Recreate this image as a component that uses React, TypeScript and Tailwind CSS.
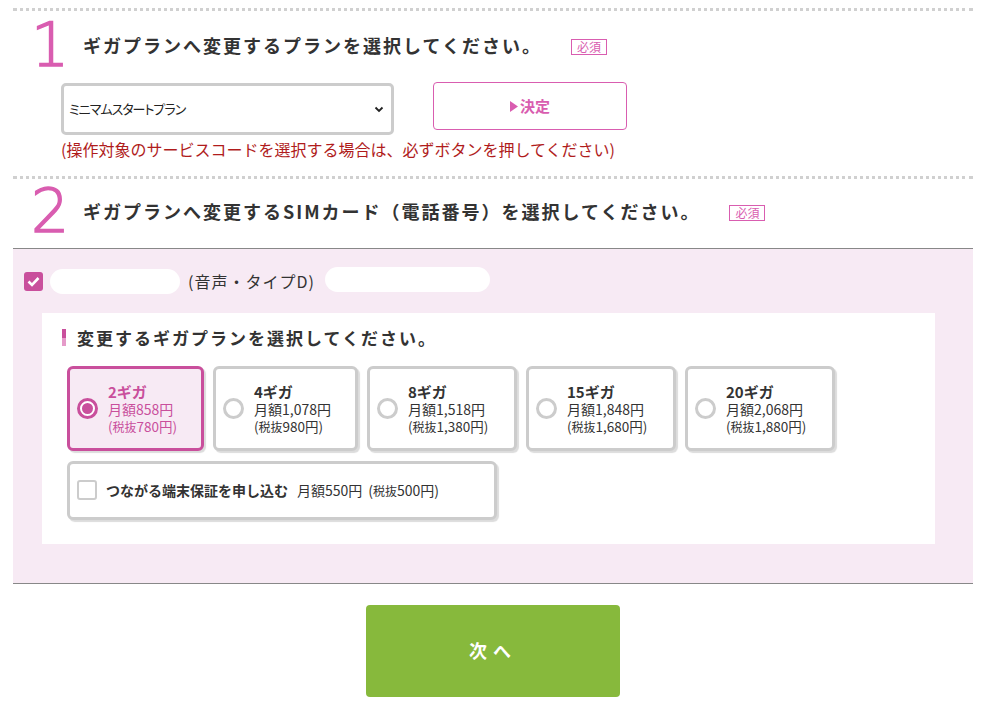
const plans = [
  { name: '2ギガ', monthly: '858', net: '780', width: 'w-[137px]' },
  { name: '4ギガ', monthly: '1,078', net: '980', width: 'w-[145px]' },
  { name: '8ギガ', monthly: '1,518', net: '1,380', width: 'w-[150px]' },
  { name: '15ギガ', monthly: '1,848', net: '1,680', width: 'w-[150px]' },
  { name: '20ギガ', monthly: '2,068', net: '1,880', width: 'w-[150px]' },
];

const Badge = () => (
  <span className="inline-block border border-[#d95db0] px-[5px] text-[12px] leading-[14px] text-[#d95db0]">
    必須
  </span>
);

const StepHeader = ({ num, title }: { num: string; title: string }) => (
  <div className="flex h-[60px] items-center">
    <div className="w-[70px] pl-[18px] font-['DejaVu_Sans',sans-serif] text-[60px] font-extralight leading-none text-[#d95db0] [-webkit-text-stroke:1.5px_#d95db0]">
      {num}
    </div>
    <h2 className="text-[18px] font-bold tracking-[2px] text-[#333]">{title}</h2>
    <div className="ml-[29px]">
      <Badge />
    </div>
  </div>
);

export default function App() {
  return (
    <div className="min-h-[707px] w-[990px] bg-white font-['Noto_Sans_CJK_JP',sans-serif] text-[#333]">
      <div className="ml-[13px] w-[960px] pt-[8px]">
        {/* Step 1 */}
        <div className="border-t-[3px] border-dotted border-[#d0d0d0]" />
        <div className="mt-[4px]">
          <StepHeader num="1" title="ギガプランへ変更するプランを選択してください。" />
        </div>
        <div className="ml-[48px] mt-[8px] flex items-start">
          <div className="flex h-[52px] w-[333px] items-center justify-between rounded-[5px] border-[3px] border-[#ccc] bg-white pl-[5px] pr-[7px]">
            <span className="text-[13px] tracking-[-1px] text-[#222] [font-feature-settings:'palt']">ミニマムスタートプラン</span>
            <svg width="10" height="10" viewBox="0 0 10 10">
              <path d="M1.5 3.5 L5 7 L8.5 3.5" fill="none" stroke="#222" strokeWidth="1.8" />
            </svg>
          </div>
          <button className="ml-[39px] mt-[-1px] flex h-[48px] w-[194px] items-center justify-center rounded-[4px] border border-[#d95db0] bg-white text-[15px] font-bold text-[#d95db0]">
            <svg width="8" height="11" viewBox="0 0 8 11" className="mr-[2px]">
              <path d="M0 0 L8 5.5 L0 11 Z" fill="#d95db0" />
            </svg>
            決定
          </button>
        </div>
        <p className="ml-[48px] mt-[2px] text-[16px] leading-[24px] text-[#b01c1c]">
          (操作対象のサービスコードを選択する場合は、必ずボタンを押してください)
        </p>

        {/* Step 2 */}
        <div className="mt-[15px] border-t-[3px] border-dotted border-[#d0d0d0]" />
        <div className="mt-[2px]">
          <StepHeader num="2" title="ギガプランへ変更するSIMカード（電話番号）を選択してください。" />
        </div>

        <div className="mt-[7px] border-y border-[#888] bg-[#f7eaf4] pb-[39px]">
          <div className="flex h-[64px] items-center pl-[11px]">
            <span className="flex h-[19px] w-[19px] items-center justify-center rounded-[3px] bg-[#c94f9c]">
              <svg width="13" height="11" viewBox="0 0 13 11">
                <path d="M1.5 5.5 L5 9 L11.5 2" fill="none" stroke="#fff" strokeWidth="2.6" />
              </svg>
            </span>
            <span className="ml-[7px] h-[25px] w-[130px] rounded-full bg-white" />
            <span className="ml-[8px] text-[16px] tracking-[1px] text-[#333]">(音声・タイプD)</span>
            <span className="ml-[10px] mt-[-4px] h-[25px] w-[165px] rounded-full bg-white" />
          </div>

          <div className="ml-[29px] w-[893px] bg-white pb-[24px] pl-[25px] pt-[12px]">
            <div className="flex items-center">
              <span className="ml-[-5px] flex h-[17px] w-[4px] flex-col">
                <span className="h-1/2 bg-[#c94f9c]" />
                <span className="h-1/2 bg-[#e59ac9]" />
              </span>
              <h3 className="ml-[11px] text-[17px] font-bold tracking-[2px] text-[#333]">
                変更するギガプランを選択してください。
              </h3>
            </div>

            <div className="mt-[15px] flex gap-[9px]">
              {plans.map((p, i) => {
                const sel = i === 0;
                return (
                  <div
                    key={p.name}
                    className={`flex h-[85px] ${p.width} items-center rounded-[6px] border-[3px] pl-[7px] shadow-[2px_2px_1px_#dcdcdc] ${
                      sel ? 'border-[#c94f9c] bg-[#f7eaf4] text-[#c94f9c]' : 'border-[#ccc] bg-white text-[#333]'
                    }`}
                  >
                    <span
                      className={`flex h-[21px] w-[21px] shrink-0 items-center justify-center rounded-full border-[3px] bg-white ${
                        sel ? 'border-[#c94f9c]' : 'border-[#ccc]'
                      }`}
                    >
                      {sel && <span className="h-[11px] w-[11px] rounded-full bg-[#c94f9c]" />}
                    </span>
                    <div className="ml-[10px] mt-[1px]">
                      <div className="text-[15px] font-bold leading-[18px]">{p.name}</div>
                      <div className="text-[14px] leading-[17px]">月額{p.monthly}円</div>
                      <div className="text-[13.5px] leading-[16px]">
                        (<span className="text-[12px]">税抜</span>
                        {p.net}円)
                      </div>
                    </div>
                  </div>
                );
              })}
            </div>

            <div className="mt-[10px] flex h-[59px] w-[430px] items-center rounded-[6px] border-[3px] border-[#ccc] bg-white pl-[7px] shadow-[2px_2px_1px_#dcdcdc]">
              <span className="h-[20px] w-[20px] rounded-[3px] border-2 border-[#ccc] bg-white" />
              <span className="ml-[9px] text-[14px] font-bold text-[#333]">つながる端末保証を申し込む</span>
              <span className="ml-[9px] text-[14px] text-[#333]">月額550円</span>
              <span className="ml-[6px] text-[14px] text-[#333]">
                (<span className="text-[12px]">税抜</span>500円)
              </span>
            </div>
          </div>
        </div>

        <div className="mt-[21px] flex justify-center">
          <button className="h-[92px] w-[254px] rounded-[4px] bg-[#87b93c] text-[18px] font-bold tracking-[6px] text-white">
            次へ
          </button>
        </div>
      </div>
    </div>
  );
}
